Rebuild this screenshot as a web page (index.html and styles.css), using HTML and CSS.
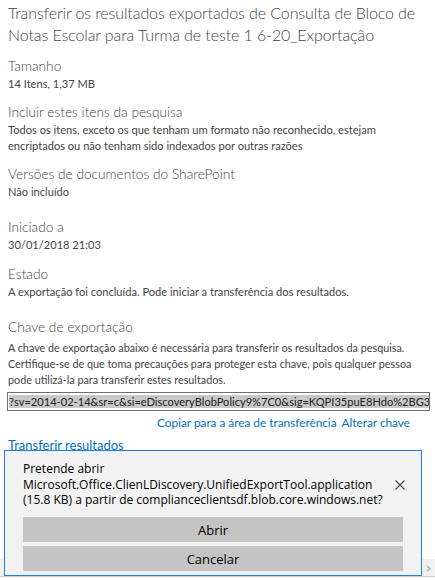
FILE: index.html
```html
<!DOCTYPE html>
<html lang="pt">
<head>
    <meta charset="UTF-8">
    <meta name="viewport" content="width=device-width, initial-scale=1.0">
    <title>Transferir resultados exportados</title>
    <link rel="stylesheet" href="styles.css">
</head>
<body>
    <div class="panel">
        <h1 class="panel-title">Transferir os resultados exportados de Consulta de Bloco de Notas Escolar para Turma de teste 1 6-20_Exportação</h1>

        <div class="field">
            <div class="field-label">Tamanho</div>
            <div class="field-value">14 Itens, 1,37 MB</div>
        </div>

        <div class="field">
            <div class="field-label">Incluir estes itens da pesquisa</div>
            <div class="field-value">Todos os itens, exceto os que tenham um formato não reconhecido, estejam encriptados ou não tenham sido indexados por outras razões</div>
        </div>

        <div class="field">
            <div class="field-label">Versões de documentos do SharePoint</div>
            <div class="field-value">Não incluído</div>
        </div>

        <div class="field field-started">
            <div class="field-label">Iniciado a</div>
            <div class="field-value">30/01/2018 21:03</div>
        </div>

        <div class="field field-state">
            <div class="field-label">Estado</div>
            <div class="field-value">A exportação foi concluída. Pode iniciar a transferência dos resultados.</div>
        </div>

        <div class="field field-key">
            <div class="field-label">Chave de exportação</div>
            <div class="field-value key-note">A chave de exportação abaixo é necessária para transferir os resultados da pesquisa. Certifique-se de que toma precauções para proteger esta chave, pois qualquer pessoa pode utilizá-la para transferir estes resultados.</div>
            <div class="key-box"><span class="key-text">?sv=2014-02-14&amp;sr=c&amp;si=eDiscoveryBlobPolicy9%7C0&amp;sig=KQPI35puE8Hdo%2BG3cX1</span></div>
            <div class="key-actions">
                <a href="#" class="link">Copiar para a área de transferência</a>
                <a href="#" class="link">Alterar chave</a>
            </div>
        </div>

        <a href="#" class="link download-link">Transferir resultados</a>
    </div>

    <!-- browser download prompt -->
    <div class="hscroll">
        <span class="hscroll-arrow">&#x203A;</span>
    </div>
    <div class="prompt">
        <div class="prompt-head">
            <div class="prompt-text">
                Pretende abrir<br>
                Microsoft.Office.ClienLDiscovery.UnifiedExportTool.application<br>
                (15.8 KB) a partir de complianceclientsdf.blob.core.windows.net?
            </div>
            <button class="prompt-close" aria-label="Fechar">
                <svg width="10" height="10" viewBox="0 0 10 10">
                    <path d="M0.5 0.5L9.5 9.5M9.5 0.5L0.5 9.5" stroke="#444" stroke-width="1.1" fill="none"/>
                </svg>
            </button>
        </div>
        <button class="prompt-btn">Abrir</button>
        <button class="prompt-btn">Cancelar</button>
    </div>
</body>
</html>
```

FILE: styles.css
```css
body {
    margin: 0;
    background: #fff;
    font-family: "Lato", "Open Sans", sans-serif;
    color: #444;
}

.panel {
    padding: 0 4px 0 8px;
}

.panel-title {
    margin: 2px 0 0;
    font-size: 16px;
    font-weight: 300;
    letter-spacing: -0.1px;
    line-height: 22px;
    color: #444;
}

.field {
    margin-top: 11px;
}

.field-started {
    margin-top: 18px;
}

.field-state {
    margin-top: 12px;
}

.field-key {
    margin-top: 18px;
}

.field-label {
    font-size: 13.7px;
    font-weight: 300;
    line-height: 18px;
    color: #444;
}

.field-value {
    margin-top: 1px;
    font-size: 11.1px;
    line-height: 16px;
    color: #444;
}

.key-note {
    margin-top: 4px;
    font-size: 10.8px;
}

.key-box {
    margin: 4px 1px 0 -1px;
    height: 17px;
    border: 1px solid #6e6e6e;
    padding: 0 0 0 1px;
    overflow: hidden;
    white-space: nowrap;
    font-size: 11.1px;
    line-height: 17px;
    color: #222;
}

.key-text {
    background: #c8c8c8;
}

.key-actions {
    display: flex;
    justify-content: flex-end;
    gap: 5px;
    margin-top: 3px;
    padding-right: 21px;
}

.link {
    font-size: 11.8px;
    line-height: 18px;
    color: #0072c6;
    text-decoration: none;
}

.download-link {
    display: inline-block;
    margin-top: 4px;
    font-size: 13px;
}

.hscroll {
    position: absolute;
    left: 0;
    right: 0;
    top: 559px;
    height: 17px;
    background: #f0f0f0;
    border-bottom: 1px solid #c9d3df;
    display: flex;
    justify-content: flex-end;
    align-items: center;
}

.hscroll-arrow {
    width: 13px;
    font-size: 14px;
    color: #a0a0a0;
    text-align: center;
    font-family: "DejaVu Sans", sans-serif;
}

.prompt {
    position: absolute;
    left: 4px;
    top: 450px;
    width: 418px;
    height: 126px;
    box-sizing: border-box;
    border: 1px solid #1f7fe0;
    background: #f2f2f2;
    padding: 0 18px;
    display: flex;
    flex-direction: column;
    gap: 4px;
    font-family: "Open Sans", sans-serif;
}

.prompt-head {
    display: flex;
    align-items: center;
    margin-top: 10px;
    margin-bottom: 5px;
}

.prompt-text {
    flex: 1;
    font-size: 12px;
    line-height: 15.7px;
    color: #000;
    white-space: nowrap;
}

.prompt-close {
    border: 0;
    background: none;
    padding: 0;
    margin-right: -2px;
    width: 10px;
    height: 10px;
    display: flex;
}

.prompt-btn {
    height: 25px;
    border: 0;
    background: #c4c4c4;
    font-family: inherit;
    font-size: 13px;
    color: #000;
    padding: 0;
}
```
